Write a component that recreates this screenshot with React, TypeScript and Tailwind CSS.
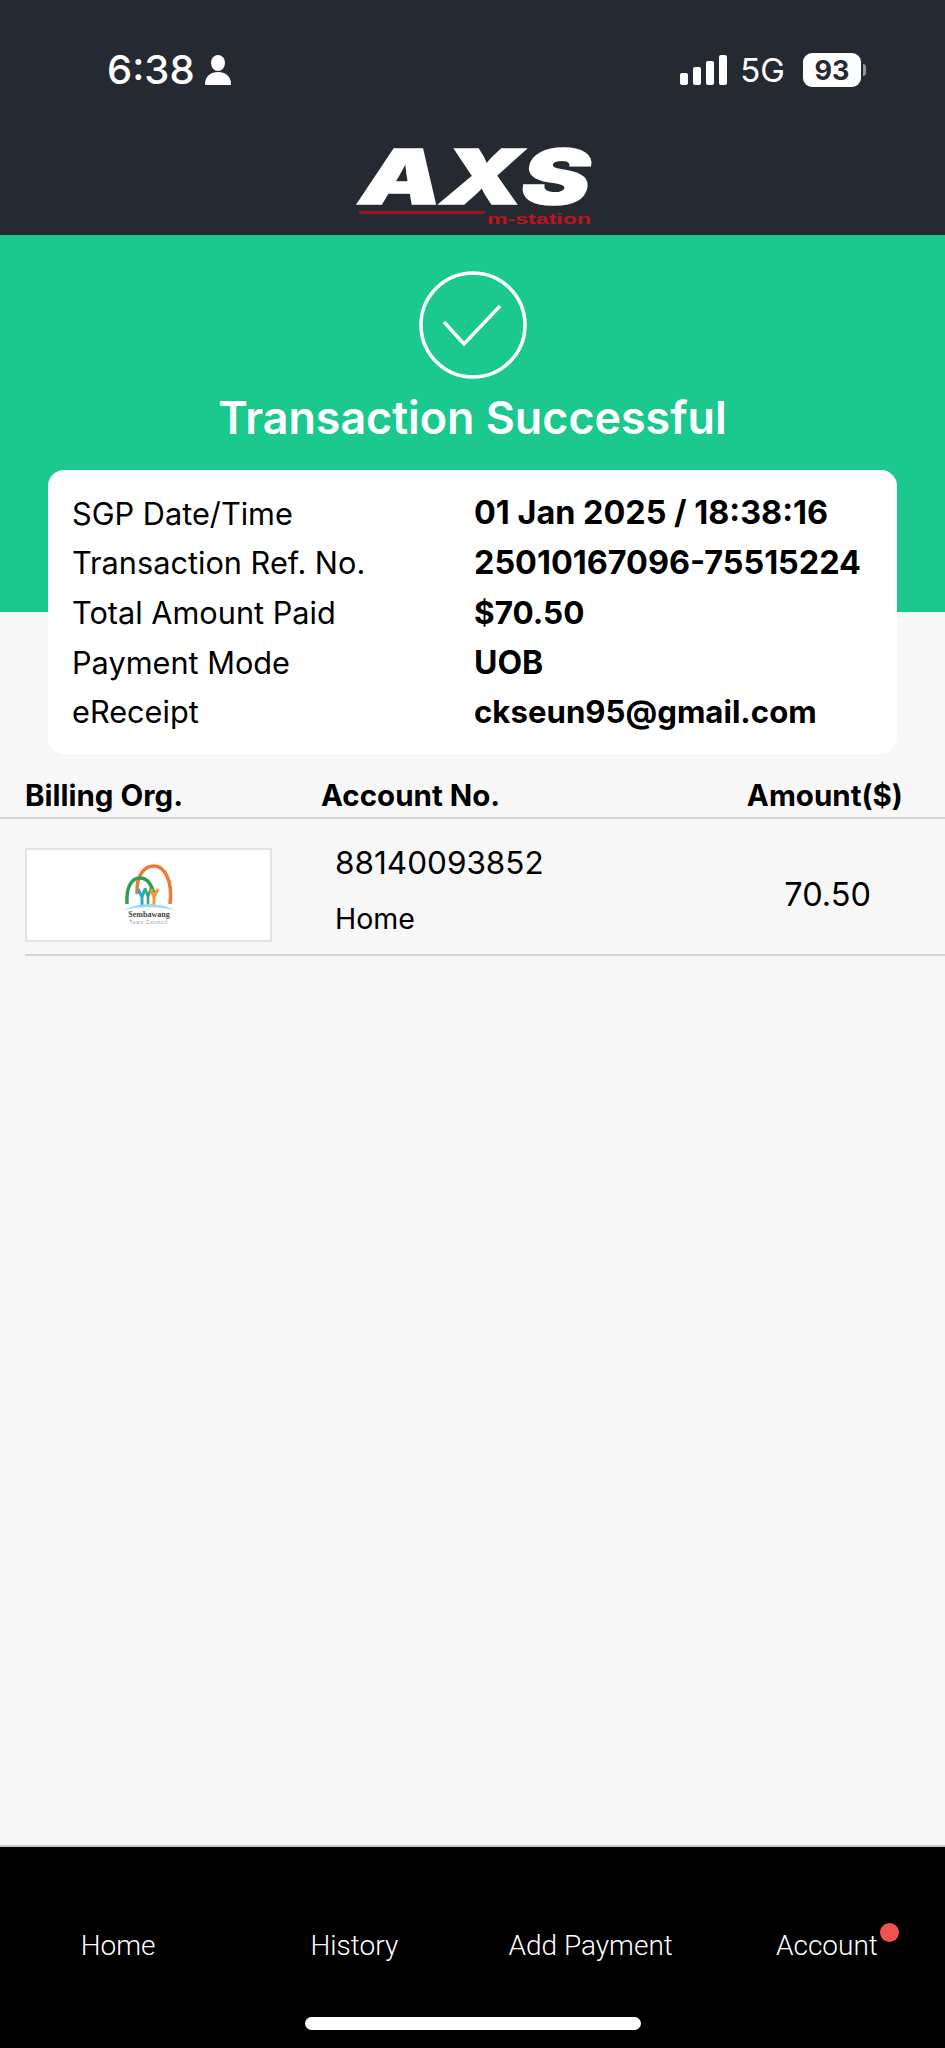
const details = [
  { label: 'SGP Date/Time', value: '01 Jan 2025 / 18:38:16', size: 'text-[32.4px]' },
  { label: 'Transaction Ref. No.', value: '25010167096-75515224', size: 'text-[32.4px]' },
  { label: 'Total Amount Paid', value: '$70.50', size: 'text-[31.5px]' },
  { label: 'Payment Mode', value: 'UOB', size: 'text-[32px]' },
  { label: 'eReceipt', value: 'ckseun95@gmail.com', size: 'text-[31.2px]' },
];

const navItems = ['Home', 'History', 'Add Payment', 'Account'];

function AxsLogo() {
  return (
    <svg width="232" height="82" viewBox="0 0 232 82" className="block overflow-visible">
      <text
        x="1"
        y="60"
        textLength="230"
        lengthAdjust="spacingAndGlyphs"
        fontFamily="'Inter', sans-serif"
        fontWeight="900"
        fontStyle="italic"
        fontSize="75"
        fill="#ffffff"
        stroke="#ffffff"
        strokeWidth="1.5"
      >
        AXS
      </text>
      <rect x="0" y="67" width="126" height="3" fill="#a0141e" />
      <text
        x="128"
        y="80"
        textLength="104"
        lengthAdjust="spacingAndGlyphs"
        fontFamily="'Liberation Sans', sans-serif"
        fontWeight="700"
        fontSize="15"
        fill="#c0131f"
      >
        m-station
      </text>
    </svg>
  );
}

function CouncilLogo() {
  return (
    <svg width="52" height="62" viewBox="0 0 52 62" fill="none" className="block">
      <path d="M14 30 C13 10 22 2 31 2 C42 2 50 18 47 40" stroke="#ee7a37" strokeWidth="3.5" />
      <path d="M4 40 C3 22 9 14 17 14 C25 14 29 22 31 30" stroke="#2e9d58" strokeWidth="3.5" />
      <path d="M19 41 L19 29 M19 33 L15 25 M19 33 L22 25" stroke="#29a9d6" strokeWidth="3" />
      <path d="M25 41 L25 28 M25 33 L22 24 M25 33 L28 24" stroke="#3aa86b" strokeWidth="2.5" />
      <path d="M31 41 L31 29 M31 33 L28 25 M31 33 L35 25" stroke="#f29a3a" strokeWidth="3" />
      <path d="M0 46 Q26 34 52 46 Q26 40 0 46 Z" fill="#9bd8f0" />
      <text x="26" y="53" textAnchor="middle" fontFamily="'Liberation Serif', serif" fontWeight="700" fontSize="8" fill="#444444">
        Sembawang
      </text>
      <text x="26" y="60" textAnchor="middle" fontFamily="'Liberation Sans', sans-serif" fontSize="4.5" letterSpacing="1" fill="#888888">
        Town Council
      </text>
    </svg>
  );
}

export default function App() {
  return (
    <div className="flex h-[2048px] w-[945px] flex-col overflow-hidden bg-[#f7f7f7] font-['Inter',sans-serif] text-black">
      {/* Status bar + logo */}
      <header className="flex h-[235px] flex-col bg-[#252a32] text-white">
        <div className="flex h-[144px] items-start justify-between pl-[107px] pr-[79px] pt-[47px]">
          <div className="flex items-center gap-[10px]">
            <span className="text-[40px] font-medium leading-[46px]">6:38</span>
            <svg width="26" height="30" viewBox="0 0 26 30" fill="#ffffff">
              <ellipse cx="13" cy="8" rx="7" ry="8" />
              <path d="M0 29 C0 21 6 17 13 17 C20 17 26 21 26 29 C26 30 25 30 24 30 L2 30 C1 30 0 30 0 29 Z" />
            </svg>
          </div>
          <div className="flex items-center pt-[5px]">
            <div className="flex items-end gap-[5px]">
              <span className="h-[12px] w-[8px] rounded-[2px] bg-white" />
              <span className="h-[18px] w-[8px] rounded-[2px] bg-white" />
              <span className="h-[24px] w-[8px] rounded-[2px] bg-white" />
              <span className="h-[30px] w-[8px] rounded-[2px] bg-white" />
            </div>
            <span className="ml-[13px] text-[33px] leading-[36px]">5G</span>
            <span className="ml-[18px] flex h-[34px] w-[58px] items-center justify-center rounded-[9px] bg-white text-[27px] font-bold leading-none text-[#252a32]">
              93
            </span>
            <span className="ml-[2px] h-[12px] w-[3px] rounded-r-full bg-white/50" />
          </div>
        </div>
        <div className="flex justify-center pl-[4px]">
          <AxsLogo />
        </div>
      </header>

      {/* Success banner */}
      <section className="flex h-[377px] flex-col items-center bg-[#1bc98e] pt-[36px] text-white">
        <svg width="108" height="108" viewBox="0 0 108 108" fill="none" stroke="#ffffff" strokeWidth="3.5">
          <circle cx="54" cy="54" r="52" />
          <path d="M25 51 L45 73 L81 35" />
        </svg>
        <h1 className="mt-[11px] text-[44.8px] font-semibold leading-[56px]">Transaction Successful</h1>
      </section>

      {/* Details card */}
      <div className="relative mx-[48px] -mt-[142px] h-[284px] rounded-[16px] bg-white px-[24px] py-[19px]">
        {details.map((row) => (
          <div key={row.label} className="grid h-[49.6px] grid-cols-[402px_1fr] items-center">
            <span className="text-[30.7px]">{row.label}</span>
            <span className={`${row.size} whitespace-nowrap font-bold`}>{row.value}</span>
          </div>
        ))}
      </div>

      {/* Billing table */}
      <div className="flex h-[65px] items-center border-b-2 border-[#d4d4d4] pl-[25px] pr-[42px] pt-[19px] text-[29.5px] font-bold">
        <span className="w-[296px]">Billing Org.</span>
        <span>Account No.</span>
        <span className="ml-auto">Amount($)</span>
      </div>
      <div className="ml-[25px] flex h-[137px] items-center border-b-2 border-[#d4d4d4] pt-[16px]">
        <div className="flex h-[94px] w-[247px] items-center justify-center border-2 border-[#e2e2e2] bg-white">
          <CouncilLogo />
        </div>
        <div className="mb-[8px] ml-[63px] flex flex-col gap-[19px]">
          <span className="text-[31.5px] leading-[38px]">88140093852</span>
          <span className="text-[28.5px] leading-[36px]">Home</span>
        </div>
        <span className="ml-auto mr-[74px] pt-[2px] text-[32.5px]">70.50</span>
      </div>

      {/* Bottom nav */}
      <nav className="mt-auto flex h-[203px] flex-col border-t-2 border-[#c8c8c8] bg-black text-white">
        <div className="grid grid-cols-4 pt-[80px]">
          {navItems.map((item) => (
            <div key={item} className="flex justify-center">
              <span className="relative font-['Roboto',sans-serif] text-[28px] font-light leading-[38px]">
                {item}
                {item === 'Account' && (
                  <span className="absolute -right-[21px] -top-[4px] h-[19px] w-[19px] rounded-full bg-[#ef5350]" />
                )}
              </span>
            </div>
          ))}
        </div>
        <div className="mx-auto mt-[52px] h-[13px] w-[336px] rounded-full bg-white" />
      </nav>
    </div>
  );
}
